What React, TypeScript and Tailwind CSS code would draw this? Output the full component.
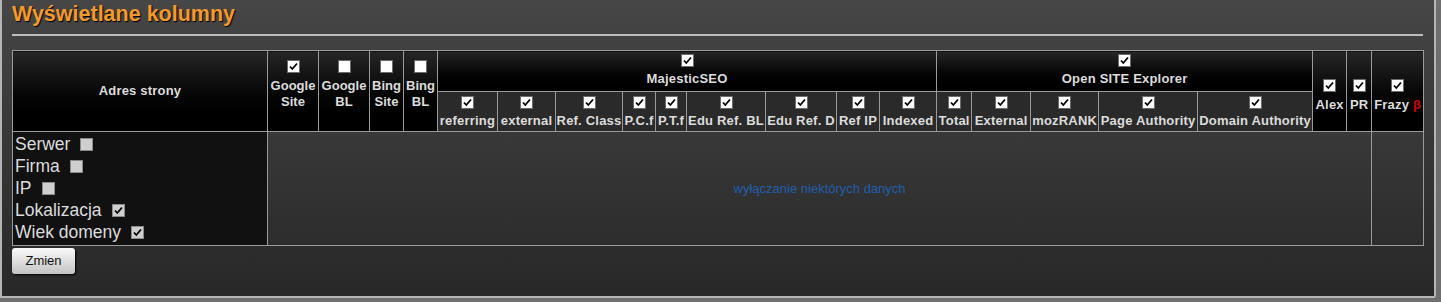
import React from 'react';

const Box: React.FC<{ checked?: boolean; grey?: boolean }> = ({ checked, grey }) => (
  <span
    className={`inline-flex items-center justify-center w-[13px] h-[13px] border align-middle ${
      grey ? 'bg-[#cfcfcf] border-[#8a8a8a]' : 'bg-white border-[#6b6b6b]'
    }`}
  >
    {checked && (
      <svg width="9" height="9" viewBox="0 0 9 9">
        <path d="M1 4.5 L3.3 7 L8 1.5" fill="none" stroke="#000" strokeWidth="1.8" />
      </svg>
    )}
  </span>
);

const head = 'border border-[#9a9a9a] bg-gradient-to-b from-[#262626] to-[#000] text-[#dcdcdc] font-bold text-[13px] tracking-[0.2px] leading-[16px] text-center align-middle';
const sub = 'border border-[#9a9a9a] bg-[#2a2a2a] text-[#dcdcdc] font-bold text-[13px] tracking-[0.2px] leading-[16px] text-center align-bottom px-0 pb-[2px] whitespace-nowrap';

const widths = [255, 51, 51, 34, 34, 60, 58, 67, 33, 31, 79, 71, 43, 57, 35, 59, 68, 99, 115, 34, 25, 52];

const majestic = ['referring', 'external', 'Ref. Class', 'P.C.f', 'P.T.f', 'Edu Ref. BL', 'Edu Ref. D', 'Ref IP', 'Indexed'];
const ose = ['Total', 'External', 'mozRANK', 'Page Authority', 'Domain Authority'];

const options = [
  { label: 'Serwer', on: false },
  { label: 'Firma', on: false },
  { label: 'IP', on: false },
  { label: 'Lokalizacja', on: true },
  { label: 'Wiek domeny', on: true },
];

const App: React.FC = () => {
  return (
    <div className="w-[1441px] h-[302px] bg-[#6e6e6e] font-['Liberation_Sans',Arial,sans-serif]">
      <div className="w-[1436px] h-[298px] bg-gradient-to-b from-[#464646] to-[#282828] border-l-2 border-r-2 border-b-2 border-[#b5b5b5] rounded-br-[3px] px-[10px]">
        <h2 className="pt-[2px] text-[21.5px] leading-[25px] font-bold text-[#f49a2c] [text-shadow:1px_1px_1px_#000]">
          Wyświetlane kolumny
        </h2>
        <div className="mt-[7px] h-[2px] w-[1411px] bg-[#bdbdbd]" />
        <table className="mt-[14px] table-fixed border-collapse w-[1411px]">
          <colgroup>
            {widths.map((w, i) => (
              <col key={i} style={{ width: w }} />
            ))}
          </colgroup>
          <thead>
            <tr className="h-[41px]">
              <th rowSpan={2} className={head}>Adres strony</th>
              {[
                ['Google', 'Site', true],
                ['Google', 'BL', false],
                ['Bing', 'Site', false],
                ['Bing', 'BL', false],
              ].map(([a, b, c], i) => (
                <th key={i} rowSpan={2} className={`${head} align-bottom pb-[14px] tracking-normal`}>
                  <Box checked={c as boolean} />
                  <div className="mt-[4px]">{a}</div>
                  <div>{b}</div>
                </th>
              ))}
              <th colSpan={9} className={`${head} align-bottom pb-[3px]`}>
                <Box checked />
                <div className="mt-[3px]">MajesticSEO</div>
              </th>
              <th colSpan={5} className={`${head} align-bottom pb-[3px]`}>
                <Box checked />
                <div className="mt-[3px]">Open SITE Explorer</div>
              </th>
              {['Alex', 'PR'].map((t) => (
                <th key={t} rowSpan={2} className={`${head} align-top`}>
                  <div className="pt-[26px]">
                    <Box checked />
                    <div className="mt-[4px]">{t}</div>
                  </div>
                </th>
              ))}
              <th rowSpan={2} className={`${head} align-top`}>
                <div className="pt-[26px]">
                  <Box checked />
                  <div className="mt-[4px]">
                    Frazy <span className="text-[#d40000]">β</span>
                  </div>
                </div>
              </th>
            </tr>
            <tr className="h-[40px]">
              {[...majestic, ...ose].map((t) => (
                <th key={t} className={sub}>
                  <Box checked />
                  <div className="mt-[3px]">{t}</div>
                </th>
              ))}
            </tr>
          </thead>
          <tbody>
            <tr className="h-[114px]">
              <td className="border border-[#9a9a9a] bg-[#111111] align-top px-[2px] pt-[1px]">
                {options.map((o) => (
                  <div key={o.label} className="h-[22px] flex items-center gap-[10px] text-[17.5px] text-[#dcdcdc]">
                    <span>{o.label}</span>
                    <Box checked={o.on} grey />
                  </div>
                ))}
              </td>
              <td colSpan={20} className="border border-[#9a9a9a] text-center align-middle text-[13px] text-[#1f5fae]">
                wyłączanie niektórych danych
              </td>
              <td className="border border-[#9a9a9a]" />
            </tr>
          </tbody>
        </table>
        <button className="mt-[2px] w-[63px] h-[26px] rounded-[3px] bg-gradient-to-b from-[#fafafa] to-[#c4c4c4] text-[13px] text-[#111] shadow-[1px_1px_2px_#000]">
          Zmien
        </button>
      </div>
    </div>
  );
};

export default App;
